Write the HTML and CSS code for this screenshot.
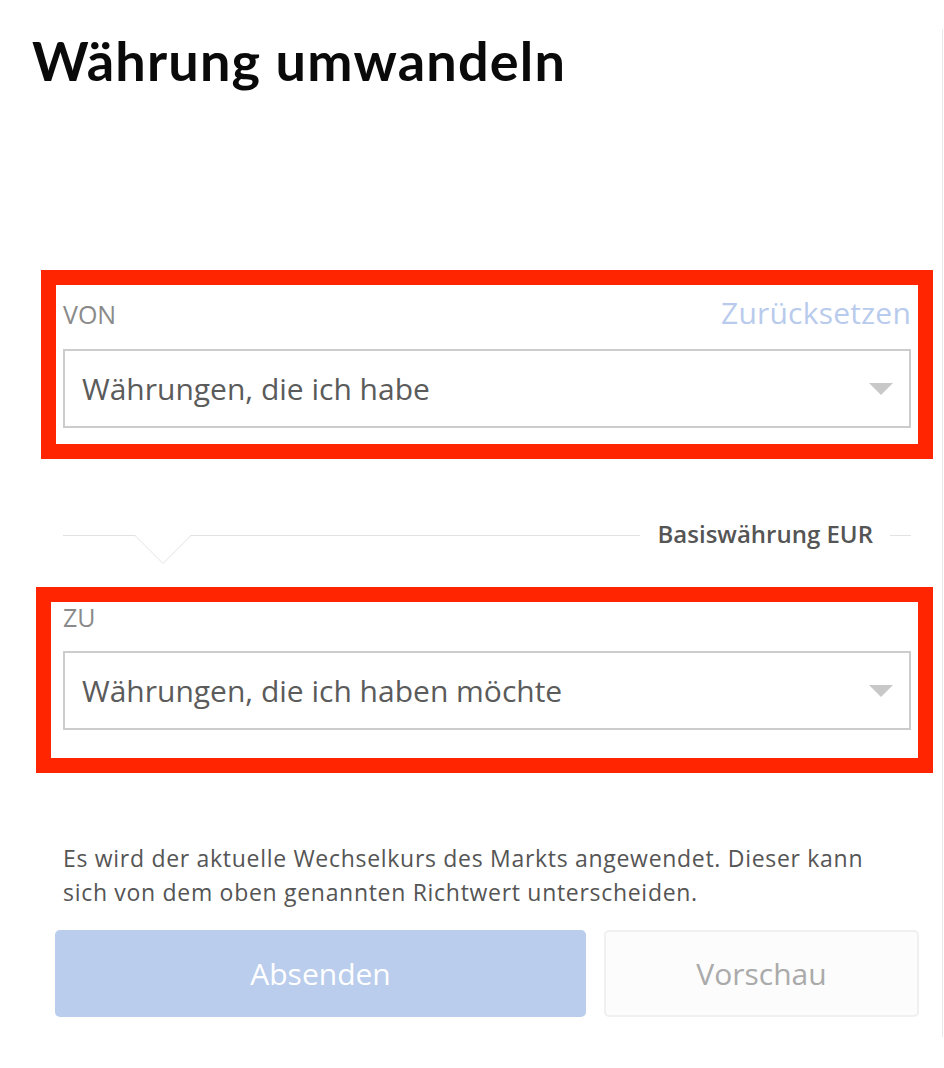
FILE: index.html
```html
<!DOCTYPE html>
<html lang="de">
<head>
<meta charset="utf-8">
<title>Währung umwandeln</title>
<link rel="stylesheet" href="styles.css">
</head>
<body>
<div class="panel">
  <h1 class="title">Währung umwandeln</h1>

  <section class="field-box field-box--from">
    <div class="label-row">
      <span class="label">VON</span>
      <span class="reset">Zurücksetzen</span>
    </div>
    <div class="select">
      <span class="select-text">Währungen, die ich habe</span>
      <span class="caret"></span>
    </div>
  </section>

  <div class="sep">
    <div class="sep-line">
      <svg class="notch" width="58" height="31" viewBox="0 0 58 31" aria-hidden="true">
        <rect x="1.5" y="0" width="55" height="1.6" fill="#ffffff"/>
        <polyline points="1,0.5 29,28.5 57,0.5" fill="none" stroke="#e2e2e2" stroke-width="1"/>
      </svg>
    </div>
    <span class="sep-text">Basiswährung EUR</span>
    <div class="sep-end"></div>
  </div>

  <section class="field-box field-box--to">
    <div class="label-line"><span class="label">ZU</span></div>
    <div class="select select--to">
      <span class="select-text">Währungen, die ich haben möchte</span>
      <span class="caret"></span>
    </div>
  </section>

  <p class="notice">Es wird der aktuelle Wechselkurs des Markts angewendet. Dieser kann sich von dem oben genannten Richtwert unterscheiden.</p>

  <div class="actions">
    <button class="btn btn-primary" type="button">Absenden</button>
    <button class="btn btn-secondary" type="button">Vorschau</button>
  </div>
</div>
</body>
</html>
```

FILE: styles.css
```css
html, body {
  margin: 0;
  padding: 0;
  background: #ffffff;
}

body {
  font-family: "Open Sans", "Liberation Sans", sans-serif;
  width: 944px;
  height: 1068px;
  overflow: hidden;
}

.panel {
  box-sizing: border-box;
  width: 943px;
  height: 1008px;
  margin-top: 29px;
  padding-top: 2px;
  border-right: 1px solid #e8e8e8;
}

.title {
  margin: 0 0 0 32px;
  font-family: Lato, "Open Sans", sans-serif;
  font-weight: 700;
  font-size: 54px;
  line-height: 60px;
  letter-spacing: 1.2px;
  color: #0a0a0a;
}

.field-box {
  box-sizing: border-box;
  border: 15px solid #ff2500;
}

.field-box--from {
  margin: 179px 0 0 41px;
  width: 892px;
  padding: 10px 7px 16px 7px;
}

.field-box--to {
  margin: 38px 0 0 36px;
  width: 897px;
  padding: 0 7px 28px 12px;
}

.label-row {
  display: flex;
  justify-content: space-between;
  align-items: baseline;
  height: 36px;
}

.label-line {
  height: 30px;
}

.label {
  font-size: 25px;
  line-height: 30px;
  color: #8a8a8a;
}

.reset {
  font-size: 30px;
  line-height: 36px;
  letter-spacing: 0.2px;
  color: #b9cbed;
}

.select {
  box-sizing: border-box;
  margin-top: 18px;
  height: 79px;
  border: 2px solid #cccccc;
  display: flex;
  align-items: center;
  justify-content: space-between;
  padding: 0 16px 0 17px;
  background: #ffffff;
}

.select--to {
  margin-top: 19px;
}

.select-text {
  font-size: 30px;
  line-height: 40px;
  color: #5b5b5b;
}

.caret {
  width: 0;
  height: 0;
  border-left: 12px solid transparent;
  border-right: 12px solid transparent;
  border-top: 12px solid #c8c8c8;
}

.sep {
  display: flex;
  align-items: flex-start;
  width: 848px;
  margin: 60px 0 0 63px;
}

.sep-line {
  position: relative;
  flex: 1;
  height: 1px;
  margin-top: 16px;
  background: #e2e2e2;
}

.notch {
  position: absolute;
  left: 71px;
  top: 0;
  display: block;
}

.sep-text {
  padding: 0 17px 0 18px;
  font-size: 24px;
  font-weight: 600;
  line-height: 30px;
  color: #555555;
}

.sep-end {
  width: 21px;
  height: 1px;
  margin-top: 16px;
  background: #e2e2e2;
}

.notice {
  width: 830px;
  margin: 68px 0 0 63px;
  font-size: 23px;
  line-height: 34px;
  letter-spacing: 0.7px;
  color: #555555;
}

.actions {
  display: flex;
  gap: 18px;
  margin: 21px 0 0 55px;
}

.btn {
  box-sizing: border-box;
  height: 87px;
  border-radius: 5px;
  font-family: "Open Sans", "Liberation Sans", sans-serif;
  font-size: 30px;
  line-height: 40px;
  padding: 0;
  cursor: pointer;
}

.btn-primary {
  width: 531px;
  border: none;
  background: #bacdec;
  color: #ffffff;
}

.btn-secondary {
  width: 315px;
  border: 2px solid #f0f0f0;
  background: #fcfcfc;
  color: #aaaaaa;
}
```
